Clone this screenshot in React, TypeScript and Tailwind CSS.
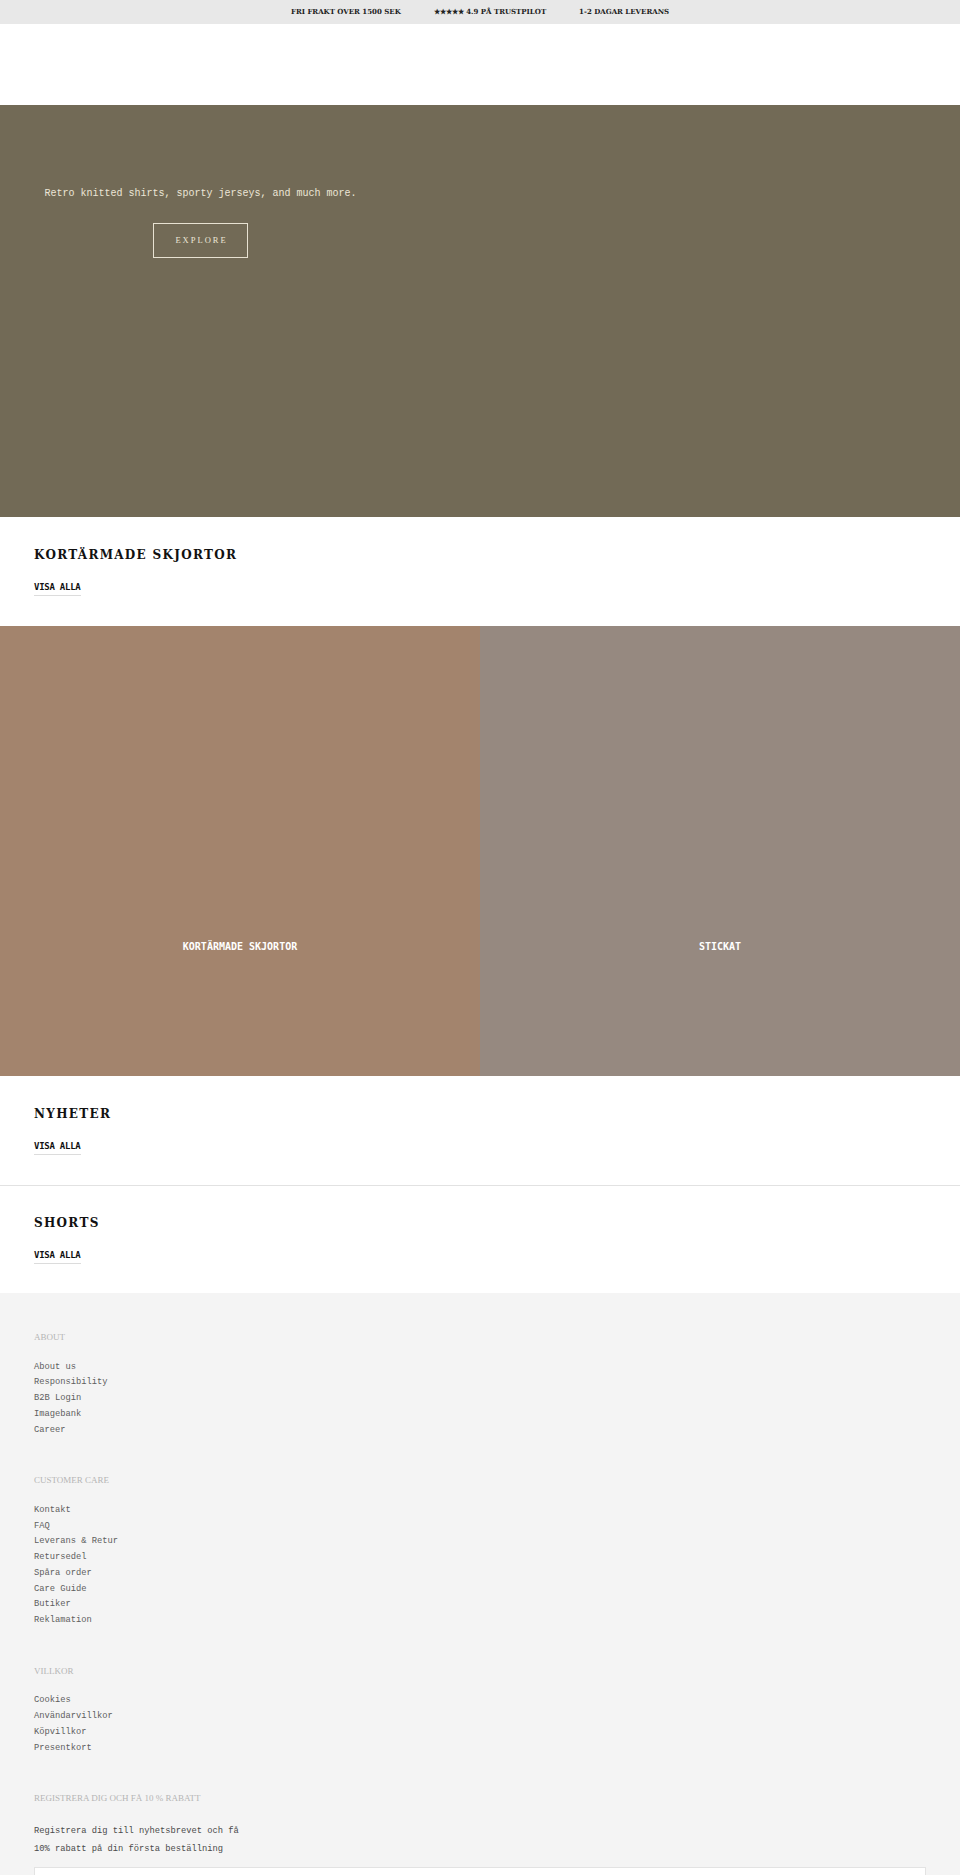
import React from "react";

const serifBold = { fontFamily: '"DejaVu Serif", serif' };

function Section({ title, className }: { title: string; className: string }) {
  return (
    <section className={`bg-white px-[34px] ${className}`}>
      <h2
        className="text-[12px] leading-[16px] font-bold tracking-[1.3px] text-[#111] uppercase"
        style={serifBold}
      >
        {title}
      </h2>
      <a
        href="#"
        className="mt-[18px] inline-block border-b border-[#dcdcdc] pb-[2px] text-[9px] leading-[12px] font-bold tracking-[-0.25px] text-[#111] font-['DejaVu_Sans_Mono',monospace]"
      >
        VISA ALLA
      </a>
    </section>
  );
}

function FooterGroup({
  title,
  items,
  first,
}: {
  title: string;
  items: string[];
  first?: boolean;
}) {
  return (
    <div className={first ? "" : "mt-[36px]"}>
      <h3 className="text-[9px] leading-[12px] uppercase text-[#b5b5b5] font-['Liberation_Serif',serif]">
        {title}
      </h3>
      <ul className="mt-[16.5px]">
        {items.map((it) => (
          <li
            key={it}
            className="text-[8.75px] leading-[15.75px] text-[#5e5e5e] font-['Liberation_Mono',monospace]"
          >
            {it}
          </li>
        ))}
      </ul>
    </div>
  );
}

export default function App() {
  return (
    <div className="w-[960px] bg-white">
      {/* Top announcement bar */}
      <div
        className="flex h-[24px] items-center justify-center gap-[33px] bg-[#e8e8e8] text-[7px] font-bold uppercase text-[#222]"
        style={serifBold}
      >
        <span>FRI FRAKT OVER 1500 SEK</span>
        <span>★★★★★ 4.9 PÅ TRUSTPILOT</span>
        <span>1-2 DAGAR LEVERANS</span>
      </div>

      {/* Header (empty) */}
      <header className="h-[81px] bg-white" />

      {/* Hero */}
      <section className="h-[412px] bg-[#726a56]">
        <div className="flex w-[401px] flex-col items-center pt-[82px]">
          <p className="text-[10px] leading-[14px] text-[#ece6d6] font-['Liberation_Mono',monospace]">
            Retro knitted shirts, sporty jerseys, and much more.
          </p>
          <a
            href="#"
            className="mt-[22px] flex h-[35px] w-[95px] items-center justify-center border border-[#e8e2d2] pl-[2px] text-[8.5px] tracking-[2px] text-[#ece6d6] font-['Liberation_Serif',serif]"
          >
            EXPLORE
          </a>
        </div>
      </section>

      <Section title="Kortärmade skjortor" className="pt-[30px] pb-[30px]" />

      {/* Category tiles */}
      <div className="grid h-[450px] grid-cols-2">
        <a href="#" className="flex items-end justify-center bg-[#a3846d] pb-[123px]">
          <span className="text-[10px] leading-[12px] font-bold text-white font-['DejaVu_Sans_Mono',monospace]">
            KORTÄRMADE SKJORTOR
          </span>
        </a>
        <a href="#" className="flex items-end justify-center bg-[#968980] pb-[123px]">
          <span className="text-[10px] leading-[12px] font-bold text-white font-['DejaVu_Sans_Mono',monospace]">
            STICKAT
          </span>
        </a>
      </div>

      <Section title="Nyheter" className="pt-[30px] pb-[30px]" />
      <Section title="Shorts" className="border-t border-[#e2e2e2] pt-[29px] pb-[29px]" />

      {/* Footer */}
      <footer className="bg-[#f4f4f4] px-[34px] pt-[38px] pb-[40px]">
        <FooterGroup
          first
          title="About"
          items={["About us", "Responsibility", "B2B Login", "Imagebank", "Career"]}
        />
        <FooterGroup
          title="Customer care"
          items={[
            "Kontakt",
            "FAQ",
            "Leverans & Retur",
            "Retursedel",
            "Spåra order",
            "Care Guide",
            "Butiker",
            "Reklamation",
          ]}
        />
        <FooterGroup
          title="Villkor"
          items={["Cookies", "Användarvillkor", "Köpvillkor", "Presentkort"]}
        />
        <div className="mt-[36px]">
          <h3 className="text-[9px] leading-[12px] uppercase text-[#b5b5b5] font-['Liberation_Serif',serif]">
            Registrera dig och få 10 % rabatt
          </h3>
          <p className="mt-[18px] text-[8.75px] leading-[18px] text-[#4a4a4a] font-['Liberation_Mono',monospace]">
            Registrera dig till nyhetsbrevet och få
            <br />
            10% rabatt på din första beställning
          </p>
          <div className="mt-[9px] h-[40px] w-full border border-[#e3e3e3] bg-white" />
        </div>
      </footer>
    </div>
  );
}
